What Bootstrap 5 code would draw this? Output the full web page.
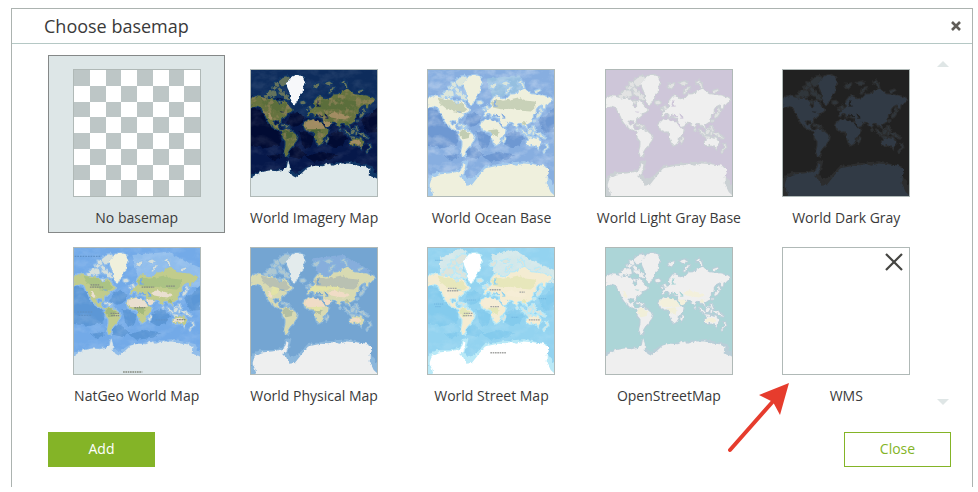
<!DOCTYPE html>
<html lang="en">
<head>
<meta charset="utf-8">
<meta name="viewport" content="width=device-width, initial-scale=1">
<title>Choose basemap</title>
<link href="https://cdn.jsdelivr.net/npm/bootstrap@5.3.0/dist/css/bootstrap.min.css" rel="stylesheet">
<style>
body { font-family: "Open Sans", "Noto Sans", sans-serif; font-size: 14px; color: #3a3a3a; background: #fff; }
.chooser { margin: 8px 5px 4px 11px; border: 1px solid #acb3b0; border-bottom: 0; }
.chooser-head { height: 35px; padding: 0 11px 0 32px; border-bottom: 1px solid #b5c8c5; }
.chooser-head h1 { font-size: 18px; line-height: 32px; font-weight: 400; }
.chooser-body { padding: 11px 21px 20px 36px; }
.tile { padding: 13px 0 2px; border: 1px solid transparent; background: none; color: inherit; line-height: 24px; }
.tile.selected { background: #dde6e7; border-color: #858888; }
.thumb { width: 128px; height: 128px; border: 1px solid #b0b9b7; margin-bottom: 9px; overflow: hidden; }
.icon-btn { padding: 0; border: 0; background: none; line-height: 0; }
.remove { top: 20px; right: 32px; }
.pointer { top: 147px; left: -32px; pointer-events: none; z-index: 2; }
.scroll-rail { width: 16px; padding: 6px 0; }
.chooser-foot { padding-top: 21px; }
.action { width: 107px; height: 35px; padding: 0 0 2px; border-radius: 0; font-size: 14px; border: 1px solid #84b427; }
.action-main { background: #84b427; color: #fff; }
.action-plain { background: #fff; color: #84b427; }

.sea { fill: var(--sea); }
.deep { fill: var(--deep, none); }
.coast { stroke: var(--coast); fill: var(--coast); stroke-width: 7; stroke-linejoin: round; }
.isles { fill: var(--isles); }
.land { fill: var(--land); }
.north { fill: var(--north, none); }
.jungle { fill: var(--jungle, none); }
.desert { fill: var(--desert, none); }
.green-ice { fill: var(--glacier); }
.pole { fill: var(--pole); }
.imagery { --sea:#06184a; --deep:#010b33; --coast:#103766; --isles:#65735c; --land:#66733f; --north:#5b6e3b; --jungle:#4d6537; --desert:#a08c62; --glacier:#f7f8fa; --pole:#dfe9eb; }
.ocean { --sea:#87aee0; --deep:#6e98d2; --coast:#a5cbed; --isles:#dbe6dc; --land:#eff0dd; --north:#c8d1b8; --jungle:#c2cdb2; --glacier:#eff0dd; --pole:#eff0dd; }
.light { --sea:#cec6d9; --coast:#cbd1d4; --isles:#e2e3e3; --land:#efefef; --glacier:#efefef; --pole:#efefef; }
.dark { --sea:#212121; --coast:#2c2d2e; --isles:#30363b; --land:#313a45; --glacier:#313a45; --pole:#313a45; }
.natgeo { --sea:#73aae8; --deep:#5c97d6; --coast:#91bdea; --isles:#d5dfdc; --land:#c1cc8c; --north:#abc384; --jungle:#a4ba7c; --desert:#eadfd0; --glacier:#f0f0dc; --pole:#dde7ea; }
.physical { --sea:#74a5d2; --coast:#8bb7dc; --isles:#aec8d2; --land:#d8dab2; --north:#b9c1b2; --jungle:#b3bfa2; --desert:#f0dcc6; --glacier:#e3ebec; --pole:#eeefef; }
.street { --sea:#93d3f0; --deep:#84cbed; --coast:#b9e9f7; --isles:#dde4dc; --land:#f4ecd2; --north:#e7e7bb; --jungle:#e3e7b8; --desert:#f6edd6; --glacier:#fff; --pole:#fff; }
.osm { --sea:#acd5d7; --coast:#b9ced8; --isles:#eee; --land:#efefef; --jungle:#f1efd9; --desert:#f3f0dc; --glacier:#efefef; --pole:#efefef; }
</style>
<script src="https://cdn.jsdelivr.net/npm/bootstrap@5.3.0/dist/js/bootstrap.bundle.min.js"></script>
</head>
<body>
<svg width="0" height="0" class="position-absolute" aria-hidden="true">
  <defs>
    <filter id="rough" x="-5%" y="-5%" width="110%" height="110%" color-interpolation-filters="sRGB">
      <feTurbulence type="fractalNoise" baseFrequency="0.09" numOctaves="2" seed="4" result="n"/>
      <feDisplacementMap in="SourceGraphic" in2="n" scale="11" xChannelSelector="R" yChannelSelector="G"/>
    </filter>
    <filter id="waves" x="0" y="0" width="100%" height="100%">
      <feTurbulence type="fractalNoise" baseFrequency="0.025 0.035" numOctaves="4" seed="9"/>
      <feColorMatrix values="0 0 0 0 1  0 0 0 0 1  0 0 0 0 1  3 0 0 0 -1.3"/>
    </filter>
    <filter id="grain" x="0" y="0" width="100%" height="100%" color-interpolation-filters="sRGB">
      <feTurbulence type="fractalNoise" baseFrequency="0.06" numOctaves="3" seed="3" result="g"/>
      <feColorMatrix values="0 0 0 0 .66  0 0 0 0 .55  0 0 0 0 .4  5 0 0 0 -2.5"/>
      <feComposite in2="SourceGraphic" operator="in"/>
    </filter>
    <g id="islands">
      <path d="M118 60l12-10 14-3 8 6-8 10-6 12-8 4-6-8-8-2zM104 66l12 2 4 10-10 2zM94 80l12-3 6 6-8 6zM80 95l12-3 18 4 2 10-14 5-14-4zM112 86l14-2 4 8-12 2zM120 96l12 0 8 8 10 10-2 8-9-6-5-8-13-4zM72 106l12-2 2 8-10 2zM98 91l10 0 2 6-10-1zM116 122l8 2 2 6-8 0z"/>
      <path d="M183 124l10-2 6 5-8 5-8-2zM207 140l5-4 5 8 2 7-9 2 2-6zM202 144l5 1-3 6-4-2zM222 70l8 2 10-3-2 9-9 8-6-7zM256 68l14-4 8 5-14 5zM268 100l3-12 10-6 7-2-3 7-9 4-3 9zM306 63l8-3 8 12 3 12-6-4-4-9-8-4zM357 92l14-4 2 5-12 4zM374 142l4 10-3 6-3-10zM361 168l8-8 5-7 2 7-6 9-8 5zM352 180l3 0 0 6-3-1zM126 193l16 3 8 5-8 1-16-6zM262 234l5-4 0 7-4 12-5-4zM300 204l5 6-4 2zM316 208l10 7 9 10-4 3-12-11zM336 212l9-5 3 6-6 9-7-2zM348 198l6 1 3 9 3 8-6-4-4-8zM334 229l16 2-1 4-14-2zM350 215l5 0-2 10-4-1zM360 218l10 2 12 7 5 6-10-2-14-7zM390 252l6 6 1 6-8 8-6 5-1-3 9-9zM364 264l5-1-2 6z"/>
    </g>
    <g id="mainland">
      <path d="M37 114l11-6 14 2 18 5 15-2 12 5 10 10-4 10 8 7 7-6-1-15 8-4 8 10 9 10 8 10-6 6-8 3-6 6-8 6-7 8-1 9-5-1-3-6-9-1-5 4 1 8 5 5 7-5 2 2-2 8 9 7 9 1-4 4-11-3-12-8-14-10-8-11-6-14-7-12-3-10-9-7-10-3-9 3-9 4 4-9-5-6z"/>
      <path d="M130 212l8-6 11 2 9 6 8 7 9 7-2 11-6 9-6 9-8 7-6 10-4 9 3 6-8-1-4-14 4-16 0-14-8-10-3-10z"/>
      <path d="M199 185l12-6 15-2 4 7 10 2 11 2 4 10 6 10 9 1-8 14-8 8-1 10-7 11-8 5-6-7-4-14-2-13-6-9-14 1-9-7-3-11z"/>
      <path d="M204 169l-1-11 9-2 0-8 10-4 7-6-5-6 1-10 10-13 12-1 10 9 9-1 10-5 8-8 12-1 14-9 13-7 10 8 12 8 17 2 18 2 17 6 12 8-9 8-12 6-1 11-6-2-3-11-12 6-7 9 0 10-8 5-1 10-4 12-10 7-6 3 4 12-8-5-6-9-8-5-8 6-4 10-6-9-6-9-12-4 4 8-12 10-10 2-7-17-3-11-10-2-6-4 4-5-9-2-1 8-9-10-8 8z"/>
      <path d="M332 244l8-7 11-4 10 4 4-6 8 12 0 13-8 7-8-4-13-5-11 2z"/>
    </g>
    <path id="greenland" d="M140 70l10-14 14-10 16-2 11 7 6 12-5 15-2 17-9 14-8 12-8 15-7-8-6-16-2-17-6-12z"/>
    <g id="lands">
      <g filter="url(#rough)">
        <use href="#islands" class="coast"/><use href="#mainland" class="coast"/><use href="#greenland" class="coast"/>
        <use href="#islands" class="isles"/><use href="#mainland" class="land"/>
        <path class="north" d="M62 113l46 7 10 14 16-10 18 24-14 12-30-7-20-9-14-11zM224 126l18-10 18 6 20-4 26-6 26 10 24 2 2 18-14 12-30-2-30-6-30 1-24-5z"/>
        <path class="jungle" d="M130 212l16-2 14 11-3 13-16 4-12-12zM218 211l24-3 8 9-7 12-16-4zM318 186l12 2-2 8-9-4z"/>
        <path class="desert" d="M198 186l26-8 26 12 7 16-24 1-32 1-4-10zM252 186l15-2 11 9-12 8-8 0zM268 164l20-8 28 8 16 6-16 8-24-3-24-4zM84 160l10 3 6 14-6 3zM335 243l18-4 12 8-6 8-12-5-12 2z"/>
        <path class="sea" d="M226 166l16-2 10 3-2 4-16-1zM255 160l6 2 7 13-4 1-6-9zM208 173l20 4 18 5-2 3-18-3-4-6-14-1zM250 186l10 16-2 1-10-14zM268 184l9 5-4 1zM233 126l5-7 3 3-4 12 6 4-8 2-3-6zM121 154l14 1-4 3-9-2z"/>
        <use href="#greenland" class="green-ice"/>
      </g>
    </g>
    <g id="depths" filter="url(#rough)">
      <path class="deep" d="M34 142l20 4 22 22 18 26 24 22 10 18-6 20-40 10-48-6zM152 166l20-8 24 12-8 22-24 8-24-8zM180 214l16 0 26 18-4 24-20 12-10-18zM260 250l16-30 24-10 24 24-14 22-26 8zM366 180l26-14 22-24 0 74-30 2zM150 256l24 4 28 26-26 10-28-6zM84 288l34-6 10 10-28 10zM200 288l50-12 48 8-26 16-50 6z"/>
    </g>
    <g id="pole-a" filter="url(#rough)">
      <path class="coast" d="M25 352l44-16 70-5 7-24 6 28 14 13 36-23 60-10 66-7 70 14 8 20 16 4v76H25z"/>
      <path class="pole" d="M25 360l22-14 22-10 20-4 22 2 20-4 11-8 4-21 5 17 0 19 9 12 11 5 14-12 20-19 22-5 24 1 18-8 12 7 20-7 30 0 22 6 24 2 14 9-2 19 12 5 24 6v70H25z"/>
    </g>
    <g id="pole-b" filter="url(#rough)">
      <path class="coast" d="M36 415l2-62 22-12 50-2 25-10 7-22 10-3-6 25-7 17 14 16 22-6 32-34 61-9 54-5 67 14-1 24 26 36v43H36z"/>
      <path class="pole" d="M48 420l0-20-9-24 6-22 20-10 45-4 24-8 8-20 5 2-4 20-9 8-2 9 12 8 6 19 16-2 22-28 18-22 38-8 24 1 16-7 16 6 22-7 30 2 32 5 13 14-5 19 0 20 12 26 14 13 0 20z"/>
    </g>
  </defs>
</svg>

<main class="chooser" aria-labelledby="heading">
  <header class="chooser-head d-flex justify-content-between align-items-center">
    <h1 id="heading" class="m-0">Choose basemap</h1>
    <button class="icon-btn" type="button" aria-label="Close dialog">
      <svg width="10" height="10" viewBox="0 0 10 10"><path d="M1 1l8 8M9 1L1 9" stroke="#5f5c58" stroke-width="2.6"/></svg>
    </button>
  </header>
  <div class="chooser-body">
    <div class="d-flex">
      <div class="row row-cols-5 g-0 flex-grow-1">
        <div class="col">
          <button type="button" class="tile selected w-100 d-flex flex-column align-items-center" aria-pressed="true">
            <span class="thumb"><svg class="d-block" width="126" height="126" viewBox="0 0 8 8" shape-rendering="crispEdges"><path fill="#fff" d="M0 0h8v8H0z"/><path fill="#bdc6c6" d="M0 0h1v8H0zM2 0h1v8H2zM4 0h1v8H4zM6 0h1v8H6z"/><path fill="#fff" d="M0 1h8v1H0zM0 3h8v1H0zM0 5h8v1H0zM0 7h8v1H0z"/><path fill="#bdc6c6" d="M1 1h1v1H1zM3 1h1v1H3zM5 1h1v1H5zM7 1h1v1H7zM1 3h1v1H1zM3 3h1v1H3zM5 3h1v1H5zM7 3h1v1H7zM1 5h1v1H1zM3 5h1v1H3zM5 5h1v1H5zM7 5h1v1H7zM1 7h1v1H1zM3 7h1v1H3zM5 7h1v1H5zM7 7h1v1H7z"/></svg></span>
            <span>No basemap</span>
          </button>
        </div>
        <div class="col">
          <button type="button" class="tile w-100 d-flex flex-column align-items-center">
            <span class="thumb imagery"><svg class="d-block" width="126" height="126" viewBox="34 29 380 380"><rect class="sea" x="30" y="25" width="390" height="390"/><path fill="#0d2c5c" filter="url(#rough)" d="M20 15h410v130l-50 20-200 10-50-60-110-10z"/><use href="#depths"/><rect x="30" y="25" width="390" height="390" filter="url(#waves)" opacity=".07"/><use href="#lands"/><use href="#mainland" filter="url(#grain)" opacity=".5"/><use href="#pole-a"/></svg></span>
            <span>World Imagery Map</span>
          </button>
        </div>
        <div class="col">
          <button type="button" class="tile w-100 d-flex flex-column align-items-center">
            <span class="thumb ocean"><svg class="d-block" width="126" height="126" viewBox="34 29 380 380"><rect class="sea" x="30" y="25" width="390" height="390"/><path fill="#95bfe0" filter="url(#rough)" d="M210 55l100-10 20 50-100 20z"/><use href="#depths"/><rect x="30" y="25" width="390" height="390" filter="url(#waves)" opacity=".25"/><use href="#lands"/><use href="#pole-b"/></svg></span>
            <span>World Ocean Base</span>
          </button>
        </div>
        <div class="col">
          <button type="button" class="tile w-100 d-flex flex-column align-items-center">
            <span class="thumb light"><svg class="d-block" width="126" height="126" viewBox="34 29 380 380"><rect class="sea" x="30" y="25" width="390" height="390"/><use href="#lands"/><use href="#pole-b"/></svg></span>
            <span>World Light Gray Base</span>
          </button>
        </div>
        <div class="col">
          <button type="button" class="tile w-100 d-flex flex-column align-items-center">
            <span class="thumb dark"><svg class="d-block" width="126" height="126" viewBox="34 29 380 380"><rect class="sea" x="30" y="25" width="390" height="390"/><use href="#lands"/><use href="#pole-b"/></svg></span>
            <span>World Dark Gray</span>
          </button>
        </div>
        <div class="col">
          <button type="button" class="tile w-100 d-flex flex-column align-items-center">
            <span class="thumb natgeo"><svg class="d-block" width="126" height="126" viewBox="34 29 380 380"><rect class="sea" x="30" y="25" width="390" height="390"/><path fill="#90bdec" filter="url(#rough)" d="M210 50l110-10 50 30 50 20v60l-190-20z"/><use href="#depths"/><rect x="30" y="25" width="390" height="390" filter="url(#waves)" opacity=".1"/><use href="#lands"/><use href="#pole-a"/><path d="M84 140h26M82 147h42M238 147h38M312 144h26M216 209h34M144 226h26M146 233h24M182 403h58M344 245h26" stroke="#858a80" stroke-width="4" stroke-dasharray="5 2"/><path d="M36 54h78M44 222h48M48 232h40M280 246h40" stroke="#5f92c8" stroke-width="4" stroke-dasharray="5 3"/></svg></span>
            <span>NatGeo World Map</span>
          </button>
        </div>
        <div class="col">
          <button type="button" class="tile w-100 d-flex flex-column align-items-center">
            <span class="thumb physical"><svg class="d-block" width="126" height="126" viewBox="34 29 380 380"><rect class="sea" x="30" y="25" width="390" height="390"/><path fill="#86aedc" filter="url(#rough)" d="M220 60l90-10 90 50-100 10-60 10z"/><use href="#lands"/><path fill="#e3e3a6" filter="url(#rough)" d="M98 144l14 4 6 12-12 14-12-6zM214 145l60-1 28 3-6 8-50 3-32 2zM216 208l34-2 4 8-30 4z"/><use href="#pole-b"/></svg></span>
            <span>World Physical Map</span>
          </button>
        </div>
        <div class="col">
          <button type="button" class="tile w-100 d-flex flex-column align-items-center">
            <span class="thumb street"><svg class="d-block" width="126" height="126" viewBox="34 29 380 380"><rect class="sea" x="30" y="25" width="390" height="390"/><path fill="#d3e8ea" filter="url(#rough)" d="M225 50l70-15 50 30 70 30v40l-180-10zM70 60l60-30 20 10-20 90-60-20z"/><use href="#depths"/><rect x="30" y="25" width="390" height="390" filter="url(#waves)" opacity=".1"/><use href="#lands"/><use href="#pole-b"/><path d="M94 151h26M92 158h34M220 155h34M310 162h16M222 206h28M142 226h26M140 233h28M222 345h48M338 246h34" stroke="#a3a4a2" stroke-width="4" stroke-dasharray="5 2"/><path d="M56 66h22M52 198h28M56 206h18M152 186h26M368 182h24M286 238h20" stroke="#70b5e0" stroke-width="3" stroke-dasharray="4 2"/></svg></span>
            <span>World Street Map</span>
          </button>
        </div>
        <div class="col">
          <button type="button" class="tile w-100 d-flex flex-column align-items-center">
            <span class="thumb osm"><svg class="d-block" width="126" height="126" viewBox="34 29 380 380"><rect class="sea" x="30" y="25" width="390" height="390"/><use href="#lands"/><use href="#pole-a"/></svg></span>
            <span>OpenStreetMap</span>
          </button>
        </div>
        <div class="col position-relative">
          <button type="button" class="tile w-100 d-flex flex-column align-items-center">
            <span class="thumb bg-white"></span>
            <span>WMS</span>
          </button>
          <button type="button" class="icon-btn remove position-absolute" aria-label="Remove WMS">
            <svg width="18" height="18" viewBox="0 0 18 18"><path d="M1 1l16 16M17 1L1 17" stroke="#454542" stroke-width="2.2"/></svg>
          </button>
          <svg class="pointer position-absolute" width="66" height="76" viewBox="0 0 66 76" aria-hidden="true"><path d="M4 70L50 18" stroke="#e63c2d" stroke-width="4" stroke-linecap="round"/><path d="M63 3L54 35L47 22L33 15z" fill="#e63c2d"/></svg>
        </div>
      </div>
      <div class="scroll-rail d-flex flex-column justify-content-between align-items-center flex-shrink-0">
        <button class="icon-btn" type="button" aria-label="Scroll up"><svg width="12" height="6" viewBox="0 0 12 6"><path d="M0 6l6-6 6 6z" fill="#dfe6e6"/></svg></button>
        <button class="icon-btn" type="button" aria-label="Scroll down"><svg width="12" height="6" viewBox="0 0 12 6"><path d="M0 0l6 6 6-6z" fill="#dfe6e6"/></svg></button>
      </div>
    </div>
    <footer class="chooser-foot d-flex justify-content-between">
      <button type="button" class="btn action action-main">Add</button>
      <button type="button" class="btn action action-plain">Close</button>
    </footer>
  </div>
</main>
</body>
</html>
